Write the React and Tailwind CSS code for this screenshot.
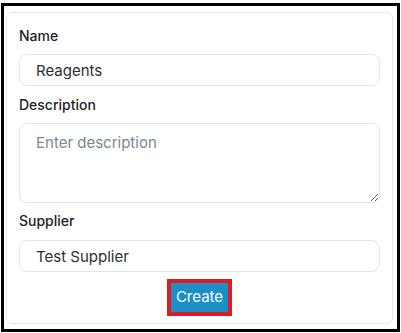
export default function App() {
  return (
    <div className="h-[333px] w-[401px] bg-white pt-[3px] pl-px font-['Inter',sans-serif]">
      <div className="h-[329px] w-[399px] border-[3px] border-black px-[2px] pt-[6px]">
        <div className="w-[387px] rounded-md border border-[#e5e7eb] bg-white px-3 pt-[13px] pb-[7px]">
          <label className="block text-[14px] leading-5 font-medium text-[#1f2328]">Name</label>
          <input
            readOnly
            value="Reagents"
            className="mt-2 block h-8 w-full rounded-lg border border-[#e2e4e8] px-4 text-[15px] text-[#2b2f36] outline-none"
          />
          <label className="mt-[9px] block text-[14px] leading-5 font-medium text-[#1f2328]">Description</label>
          <textarea
            placeholder="Enter description"
            className="mt-2 block h-20 w-full rounded-lg border border-[#e2e4e8] px-4 pt-2 text-[15px] text-[#2b2f36] outline-none placeholder:text-[#7b8596]"
          />
          <label className="mt-2 block text-[14px] leading-5 font-medium text-[#1f2328]">Supplier</label>
          <input
            readOnly
            value="Test Supplier"
            className="mt-[9px] block h-8 w-full rounded-lg border border-[#e2e4e8] px-4 text-[15px] text-[#2b2f36] outline-none"
          />
          <div className="mt-[7px] flex justify-center">
            <div className="border-4 border-[#e01b24]">
              <button className="h-[29px] w-[57px] bg-[#1b8fc8] text-[15px] text-white">Create</button>
            </div>
          </div>
        </div>
      </div>
    </div>
  );
}
